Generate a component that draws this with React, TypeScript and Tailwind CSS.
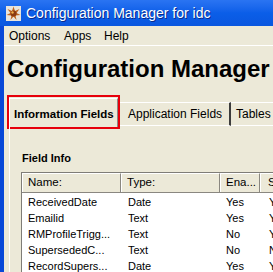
const rows = [
  ["ReceivedDate", "Date", "Yes", "Y"],
  ["Emailid", "Text", "Yes", "Y"],
  ["RMProfileTrigg...", "Text", "No", "Y"],
  ["SupersededC...", "Text", "No", "N"],
  ["RecordSupers...", "Date", "Yes", "Y"],
];

function AppIcon() {
  return (
    <svg width="15" height="15" viewBox="0 0 15 15" className="shrink-0">
      <rect x="0" y="0" width="15" height="15" fill="#e8e4dc" />
      <polygon
        points="7.5,0.5 9,5 13.5,3 10.5,7 14.5,9 9.5,9.5 10.5,14 7.5,10.5 4.5,14 5.5,9.5 0.5,9 4.5,7 1.5,3 6,5"
        fill="#c0641e"
      />
      <circle cx="7.5" cy="7.5" r="3" fill="#8a3a12" />
      <circle cx="6.5" cy="6.5" r="1.2" fill="#f2b04a" />
    </svg>
  );
}

export default function App() {
  return (
    <div className="flex h-[272px] w-[273px] flex-col overflow-hidden bg-[#0848d8] font-['Liberation_Sans',Arial,sans-serif]">
      {/* title bar */}
      <div className="flex h-[26px] shrink-0 items-center gap-[5px] bg-gradient-to-b from-[#2a74f2] via-[#0b5ee8] to-[#0a57df] pl-[6px] pt-px">
        <AppIcon />
        <span className="whitespace-nowrap text-[14px] text-white [text-shadow:1px_1px_0_#0a2a8a]">
          Configuration Manager for idc
        </span>
      </div>

      <div className="ml-[4px] flex flex-1 flex-col bg-[#ece9d8]">
        {/* menu */}
        <div className="flex h-[20px] shrink-0 items-center border-b border-white pl-[5px] text-[12px] text-black">
          <span className="w-[55px]">Options</span>
          <span className="w-[40px]">Apps</span>
          <span>Help</span>
        </div>

        <h1 className="mt-[9px] whitespace-nowrap pl-[3px] text-[24px] font-bold leading-[28px] text-black">
          Configuration Manager
        </h1>

        {/* tabs */}
        <div className="ml-[3px] mt-[12px] flex items-end whitespace-nowrap">
          <div className="h-[32px] w-[113px] shrink-0 border-l-2 border-r-2 border-t-2 border-red-600 pt-px">
            <div className="flex h-full items-center border-l border-r border-t border-l-white border-r-[#8a8a86] border-t-white pl-[4px] pt-[3px] text-[11.5px] font-bold text-black">
              Information Fields
            </div>
          </div>
          <div className="mb-px flex h-[24px] w-[111px] shrink-0 items-center border-b border-r-2 border-t border-b-white border-r-[#3c3c3c] border-t-white pl-[8px] text-[12px] text-black">
            Application Fields
          </div>
          <div className="mb-px flex h-[24px] flex-1 items-center border-b border-t border-white pl-[5px] text-[12px] text-black">
            Tables
          </div>
        </div>
        <div className="ml-[3px] h-[2px] w-[113px] bg-red-600" />

        {/* panel */}
        <div className="-mt-[2px] ml-[5px] flex flex-1 flex-col border-l border-white pl-[11px] pt-[24px]">
          <div className="pl-px text-[11px] font-bold leading-[14px] text-black">Field Info</div>
          <div className="mt-[7px] flex flex-1 flex-col border-l border-t border-[#7f7d77] bg-white">
            <div className="flex h-[20px] shrink-0 whitespace-nowrap border-b border-[#8a8780] bg-[#ece9d8] text-[11.5px] text-black">
              <div className="flex w-[99px] shrink-0 items-center border-l border-r border-t border-l-white border-r-[#8a8780] border-t-white pl-[5px]">
                Name:
              </div>
              <div className="flex w-[99px] shrink-0 items-center border-l border-r border-t border-l-white border-r-[#8a8780] border-t-white pl-[5px]">
                Type:
              </div>
              <div className="flex w-[40px] shrink-0 items-center border-l border-r border-t border-l-white border-r-[#8a8780] border-t-white pl-[5px]">
                Ena...
              </div>
              <div className="flex flex-1 items-center border-l border-t border-white pl-[7px]">S</div>
            </div>
            <div className="flex flex-col pt-px">
              {rows.map((r) => (
                <div key={r[0]} className="flex h-[16px] items-center whitespace-nowrap text-[11px] text-black">
                  <div className="w-[99px] shrink-0 pl-[6px]">{r[0]}</div>
                  <div className="w-[99px] shrink-0 pl-[7px]">{r[1]}</div>
                  <div className="w-[40px] shrink-0 pl-[6px]">{r[2]}</div>
                  <div className="flex-1 pl-[9px]">{r[3]}</div>
                </div>
              ))}
            </div>
          </div>
        </div>
      </div>
    </div>
  );
}
